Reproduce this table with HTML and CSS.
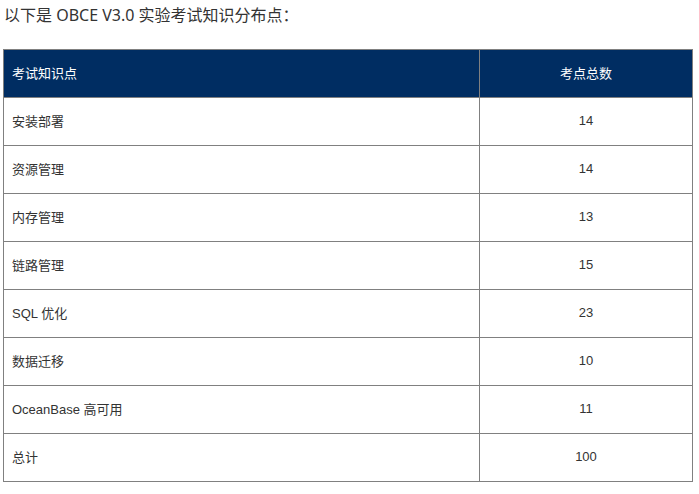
FILE: index.html
```html
<!DOCTYPE html>
<html lang="zh">
<head>
<meta charset="utf-8">
<link rel="stylesheet" href="styles.css">
</head>
<body>
<div class="page">
  <p class="intro">以下是 OBCE V3.0 实验考试知识分布点：</p>
  <table class="grid">
    <colgroup><col class="c1"><col class="c2"></colgroup>
    <thead>
      <tr><th class="name">考试知识点</th><th class="num">考点总数</th></tr>
    </thead>
    <tbody>
      <tr><td class="name">安装部署</td><td class="num">14</td></tr>
      <tr><td class="name">资源管理</td><td class="num">14</td></tr>
      <tr><td class="name">内存管理</td><td class="num">13</td></tr>
      <tr><td class="name">链路管理</td><td class="num">15</td></tr>
      <tr><td class="name">SQL 优化</td><td class="num">23</td></tr>
      <tr><td class="name">数据迁移</td><td class="num">10</td></tr>
      <tr><td class="name">OceanBase 高可用</td><td class="num">11</td></tr>
      <tr><td class="name">总计</td><td class="num">100</td></tr>
    </tbody>
  </table>
</div>
</body>
</html>
```

FILE: styles.css
```css
html, body {
  margin: 0;
  padding: 0;
  background: #ffffff;
}
.page {
  padding: 0 3px;
  font-family: "Noto Sans", "Noto Sans CJK SC", sans-serif;
  color: #333333;
}
.intro {
  margin: 0 0 19px 1px;
  font-size: 16px;
  line-height: 30px;
  color: #333333;
}
.grid {
  border-collapse: collapse;
  table-layout: fixed;
  width: 689px;
  font-family: "Liberation Sans", "Noto Sans CJK SC", sans-serif;
  font-size: 13px;
}
.c1 { width: 476px; }
.c2 { width: 213px; }
.grid th, .grid td {
  border: 1px solid #808080;
  height: 48px;
  padding: 0 8px 2px;
  box-sizing: border-box;
  vertical-align: middle;
}
.grid th {
  background: #002d62;
  color: #ffffff;
  font-weight: normal;
}
.grid td {
  color: #333333;
}
.grid .name { text-align: left; }
.grid .num { text-align: center; }
```
